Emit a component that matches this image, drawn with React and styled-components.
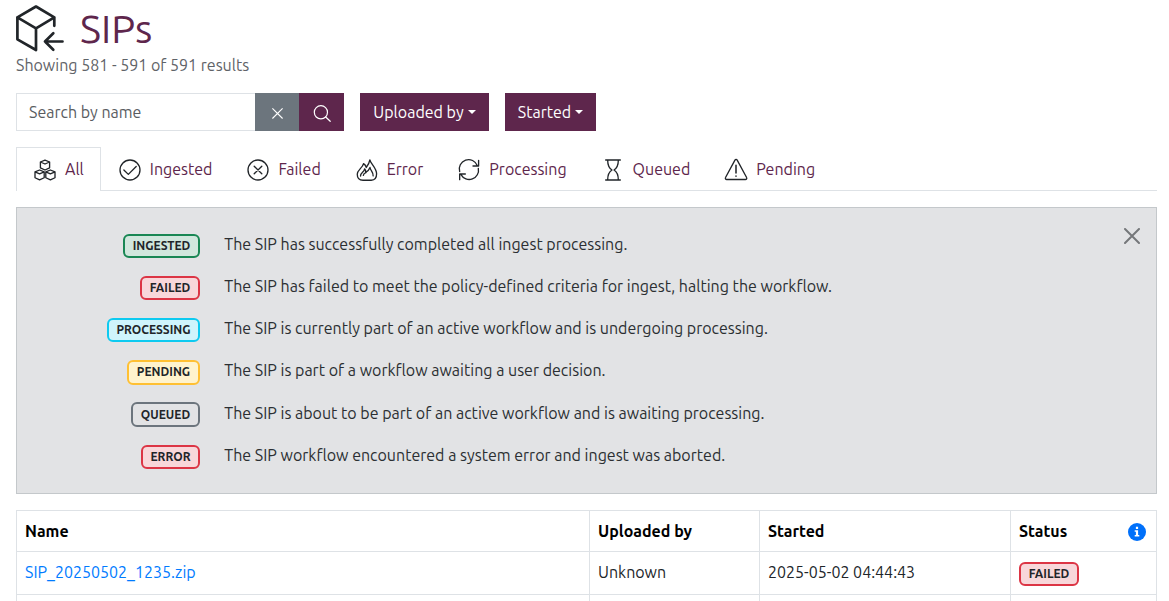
import React from "react";
import styled, { createGlobalStyle } from "styled-components";

const plum = "#5e264c";
const line = "#dee2e6";

const Global = createGlobalStyle`
  *, *::before, *::after { box-sizing: border-box; }
  html, body { margin: 0; background: #fff; }
  body {
    font-family: Ubuntu, "Noto Sans", "Open Sans", sans-serif;
    font-size: 16px;
    line-height: 24px;
    color: #212529;
  }
  svg { display: block; flex: none; }
`;

const Page = styled.main`
  height: 601px;
  overflow: hidden;
  padding: 4px 12px 0 16px;
`;

const Label = styled.span`
  white-space: nowrap;
`;

const Heading = styled.h1`
  display: flex;
  align-items: center;
  gap: 16px;
  height: 49px;
  margin: 0;
  color: ${plum};
  font-size: 40px;
  font-weight: 400;
  line-height: 48px;
  svg { color: #212529; margin-top: -1px; }
`;

const Summary = styled.div`
  height: 24px;
  margin-bottom: 16px;
  color: #5f6368;
`;

const Toolbar = styled.div`
  display: flex;
  gap: 16px;
  height: 38px;
  margin-bottom: 16px;
`;

const SearchGroup = styled.div`
  display: flex;
  width: 328px;
`;

const SearchField = styled.div`
  width: 239px;
  padding: 6px 12px;
  border: 1px solid ${line};
  border-right: 0;
  color: #595c5f;
`;

const Button = styled.button`
  display: flex;
  align-items: center;
  justify-content: center;
  gap: 4px;
  width: ${(p) => p.$width}px;
  padding: 0;
  border: 0;
  color: #fff;
  background: ${(p) => (p.$muted ? "#6c757d" : plum)};
  font: inherit;
`;

const Caret = styled.span`
  border: 4.5px solid transparent;
  border-top-color: #fff;
  border-bottom: 0;
`;

const Tabs = styled.nav`
  display: flex;
  height: 44px;
  margin-bottom: 16px;
  box-shadow: inset 0 -1px ${line};
`;

const Tab = styled.div`
  display: flex;
  align-items: center;
  gap: 8px;
  padding: 0 16px;
  border: 1px solid ${(p) => (p.$active ? line : "transparent")};
  border-bottom: 0;
  color: ${plum};
  background: ${(p) => (p.$active ? "#fff" : "transparent")};
  svg { color: #212529; }
  ${Label} { margin-bottom: 2px; }
`;

const Legend = styled.section`
  display: flex;
  justify-content: space-between;
  height: 287px;
  margin-bottom: 16px;
  padding: 16px 16px 0 0;
  border: 1px solid #c4c8cb;
  background: #e2e3e5;
  color: #2b2f32;
`;

const LegendRows = styled.div`
  flex: 1;
`;

const LegendRow = styled.div`
  display: grid;
  grid-template-columns: 183px 1fr;
  column-gap: 24.3px;
  align-items: start;
  height: 42.2px;
  padding-top: 7.8px;
`;

const BadgeCell = styled.div`
  display: flex;
  justify-content: flex-end;
  padding-top: 1.8px;
`;

const tones = {
  success: ["#198754", "#d1e7dd"],
  danger: ["#dc3545", "#f8d7da"],
  info: ["#0dcaf0", "#cff4fc"],
  warning: ["#ffc033", "#fff3cd"],
  secondary: ["#6c757d", "#e2e3e5"],
};

const Badge = styled.span`
  display: inline-flex;
  align-items: center;
  justify-content: center;
  width: ${(p) => p.$width}px;
  height: 24.4px;
  border: 2px solid ${(p) => tones[p.$tone][0]};
  border-radius: 6px;
  color: #212529;
  background: ${(p) => tones[p.$tone][1]};
  font-size: 12px;
  font-weight: 700;
  line-height: 12px;
  white-space: nowrap;
`;

const CloseButton = styled.button`
  display: flex;
  height: 24px;
  padding: 4px 0;
  border: 0;
  color: #75777a;
  background: none;
`;

const Table = styled.table`
  width: 1141px;
  table-layout: fixed;
  border-collapse: collapse;
  color: #212529;
`;

const Cell = styled.td`
  height: ${(p) => p.$height}px;
  padding: ${(p) => (p.$head ? "0 8px" : "0 8px 3px")};
  border: 1px solid ${line};
  text-align: left;
  vertical-align: middle;
  font-weight: ${(p) => (p.$head ? 700 : 400)};
  color: ${(p) => (p.$head ? "#000" : "inherit")};
`;

const StatusHead = styled.div`
  display: flex;
  align-items: center;
  justify-content: space-between;
  padding-right: 2px;
  svg { margin-top: 1px; }
`;

const StatusWrap = styled.div`
  display: flex;
  padding-top: 5px;
`;

const Link = styled.a`
  color: #007bff;
  text-decoration: none;
`;

const PackageIn = () => (
  <svg width="48" height="48" viewBox="0 0 48 48" fill="none" stroke="currentColor" strokeWidth="2.7" strokeLinecap="round" strokeLinejoin="round">
    <path d="M38.3 21.8V13.3L20 2.5 1.4 13.3V35.3L20 46V24.3M1.4 13.3L20 24.3 38.3 13.3" />
    <path d="M46.5 37.5H29M37.3 29.3L29 37.5 37.3 45.7" />
  </svg>
);

const Icon = ({ children }) => (
  <svg width="24" height="24" viewBox="0 0 36 36" fill="none" stroke="currentColor" strokeWidth="2" strokeLinecap="round" strokeLinejoin="round">
    {children}
  </svg>
);

const block = "l6.900-2.800 6.900 2.800v8.800l-6.900 3.200-6.900-3.200zl6.900 3 6.900-3";
const icons = {
  all: (
    <>
      <path d={"M11.100 6" + block} />
      <path d={"M3 20.800" + block} />
      <path d={"M19.200 20.800" + block} />
    </>
  ),
  ingested: (
    <>
      <circle cx="18" cy="18" r="15" />
      <path d="M8.8 17.9l6.7 6.7 11.8-11.8" />
    </>
  ),
  failed: (
    <>
      <circle cx="18" cy="18" r="15" />
      <path d="M12.3 12.3l11.4 11.4M23.7 12.3L12.3 23.7" />
    </>
  ),
  error: (
    <>
      <path d="M22.300 2.800c.5 5 10.100 12 10.100 21 0 6-3.300 9.600-8 9.600H12c-5.300 0-8.600-3.500-8.600-9 0-6.500 8-9.400 9.400-16 2 1.300 3.600 3.400 4.200 5.800C19.300 11 21.500 7.500 22.300 2.800z" />
      <path d="M8.300 27c-.5-5 6.200-6 6-10.700 1.500 1.300 2 3 1.700 5.200 3.200-1.500 5.200-3.900 6.500-7.300.6 5 5.400 7.400 4.700 12.600M12.500 26c.3-2 2-3.500 4-4" />
    </>
  ),
  processing: (
    <>
      <path d="M4 20.500A14 14 0 0 1 30.500 11.500M32.400 3.500V12H24" />
      <path d="M32 15.500A14 14 0 0 1 6 25M4 32.500V24h8.500" />
    </>
  ),
  queued: (
    <>
      <path d="M7 3h22M7 33h22M10 3c0 8.500 1.500 12 6.500 15-5 3-6.500 6.500-6.500 15M26 3c0 8.500-1.500 12-6.500 15 5 3 6.500 6.500 6.500 15" />
    </>
  ),
  pending: (
    <>
      <path d="M16.400 3.100L2.300 29.200a2 2 0 0 0 1.800 3h28a2 2 0 0 0 1.800-3L19.800 3.100a2 2 0 0 0-3.400 0z" />
      <path d="M18 11v11.500M18 27v.3" strokeWidth="2.300" />
    </>
  ),
};

const tabs = [
  ["all", "All"],
  ["ingested", "Ingested"],
  ["failed", "Failed"],
  ["error", "Error"],
  ["processing", "Processing"],
  ["queued", "Queued"],
  ["pending", "Pending"],
];

const legend = [
  ["INGESTED", "success", 77, "The SIP has successfully completed all ingest processing."],
  ["FAILED", "danger", 60, "The SIP has failed to meet the policy-defined criteria for ingest, halting the workflow."],
  ["PROCESSING", "info", 93, "The SIP is currently part of an active workflow and is undergoing processing."],
  ["PENDING", "warning", 73, "The SIP is part of a workflow awaiting a user decision."],
  ["QUEUED", "secondary", 69, "The SIP is about to be part of an active workflow and is awaiting processing."],
  ["ERROR", "danger", 59, "The SIP workflow encountered a system error and ingest was aborted."],
];

export default function App() {
  return (
    <Page>
      <Global />
      <Heading>
        <PackageIn />
        <Label>SIPs</Label>
      </Heading>
      <Summary><Label>Showing 581 - 591 of 591 results</Label></Summary>

      <Toolbar>
        <SearchGroup>
          <SearchField><Label>Search by name</Label></SearchField>
          <Button $width={44} $muted aria-label="Clear">
            <svg width="12" height="14" viewBox="0 0 12 14" stroke="currentColor" strokeWidth="1.1">
              <path d="M1.400 3.300l10.200 10.200M11.600 3.300L1.400 13.500" />
            </svg>
          </Button>
          <Button $width={45} aria-label="Search">
            <svg width="18" height="22" viewBox="0 0 18 22" fill="none" stroke="currentColor" strokeWidth="1.200" strokeLinecap="round">
              <circle cx="7.900" cy="11.300" r="6.600" />
              <path d="M12.700 16l4.500 4.300" />
            </svg>
          </Button>
        </SearchGroup>
        <Button $width={129}><Label>Uploaded by</Label><Caret /></Button>
        <Button $width={91}><Label>Started</Label><Caret /></Button>
      </Toolbar>

      <Tabs>
        {tabs.map(([id, text], i) => (
          <Tab key={id} $active={i === 0}>
            <Icon>{icons[id]}</Icon>
            <Label>{text}</Label>
          </Tab>
        ))}
      </Tabs>

      <Legend>
        <LegendRows>
          {legend.map(([name, tone, width, text]) => (
            <LegendRow key={name}>
              <BadgeCell><Badge $tone={tone} $width={width}>{name}</Badge></BadgeCell>
              <Label>{text}</Label>
            </LegendRow>
          ))}
        </LegendRows>
        <CloseButton aria-label="Close">
          <svg width="16" height="16" viewBox="0 0 16 16" stroke="currentColor" strokeWidth="2" strokeLinecap="round">
            <path d="M1 1l14 14M15 1L1 15" />
          </svg>
        </CloseButton>
      </Legend>

      <Table>
        <colgroup>
          <col width="573" />
          <col width="170" />
          <col width="251" />
          <col width="146" />
        </colgroup>
        <tbody>
          <tr>
            <Cell as="th" $head $height={41}><Label>Name</Label></Cell>
            <Cell as="th" $head $height={41}><Label>Uploaded by</Label></Cell>
            <Cell as="th" $head $height={41}><Label>Started</Label></Cell>
            <Cell as="th" $head $height={41}>
              <StatusHead>
                <Label>Status</Label>
                <svg width="18" height="18" viewBox="0 0 18 18">
                  <circle cx="9" cy="9" r="9" fill="#0070fa" />
                  <path d="M7.900 3.800h2.200v2.100H7.900zM6.700 7.300h3.400v4.800h1.200v1.500H6.700v-1.500h1.200V8.800H6.700z" fill="#fff" />
                </svg>
              </StatusHead>
            </Cell>
          </tr>
          <tr>
            <Cell $height={43}><Link><Label>SIP_20250502_1235.zip</Label></Link></Cell>
            <Cell $height={43}><Label>Unknown</Label></Cell>
            <Cell $height={43}><Label>2025-05-02 04:44:43</Label></Cell>
            <Cell $height={43}><StatusWrap><Badge $tone="danger" $width={60}>FAILED</Badge></StatusWrap></Cell>
          </tr>
          <tr>
            <Cell $height={43} />
            <Cell $height={43} />
            <Cell $height={43} />
            <Cell $height={43} />
          </tr>
        </tbody>
      </Table>
    </Page>
  );
}
